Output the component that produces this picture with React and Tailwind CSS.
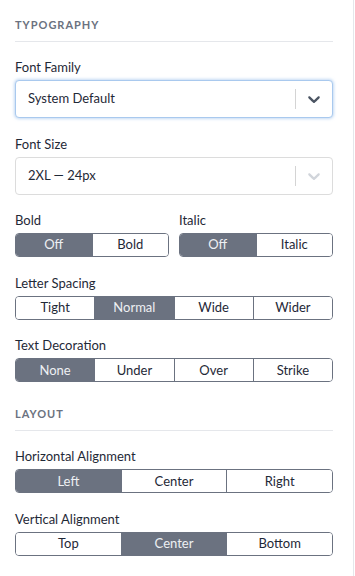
import React, { useState } from "react";

const font = { fontFamily: "Lato, 'Noto Sans', sans-serif" };

function Chevron({ className }) {
	return (
		<svg viewBox="0 0 20 20" width="20" height="20" className={className} fill="currentColor">
			<path d="M4.516 7.548c0.436-0.446 1.043-0.481 1.576 0l3.908 3.747 3.908-3.747c0.533-0.481 1.141-0.446 1.574 0 0.436 0.445 0.408 1.197 0 1.615-0.406 0.418-4.695 4.502-4.695 4.502-0.217 0.223-0.502 0.335-0.787 0.335s-0.57-0.112-0.789-0.335c0 0-4.287-4.084-4.695-4.502s-0.436-1.17 0-1.615z" />
		</svg>
	);
}

function SectionTitle({ children }) {
	return (
		<div className="pb-2 border-b border-[#e5e7eb] text-[11px] leading-4 font-bold tracking-[0.09em] text-[#6b7280] uppercase">
			{children}
		</div>
	);
}

function Label({ children }) {
	return <div className="text-[13px] leading-[18px] text-[#1f2937] mb-1">{children}</div>;
}

function Select({ value, focused }) {
	return (
		<div
			className={
				"flex items-center h-[38px] rounded-[4px] bg-white border " +
				(focused
					? "border-[#a9c9ee] shadow-[0_0_3px_1px_rgba(147,187,235,0.55)]"
					: "border-[#dcdcdc]")
			}
		>
			<div className="flex-1 pl-3 text-[13px] text-[#1f2937]">{value}</div>
			<div className="w-px h-5 bg-[#d4d4d4]" />
			<div className="px-2 flex items-center">
				<Chevron className={focused ? "text-[#4b5563]" : "text-[#d1d5db]"} />
			</div>
		</div>
	);
}

function Segmented({ options, initial }) {
	const [active, setActive] = useState(initial);
	return (
		<div className="flex h-[24px] rounded-[4px] border border-[#6b7280] overflow-hidden">
			{options.map((o, i) => (
				<button
					key={o}
					onClick={() => setActive(o)}
					className={
						"flex-1 flex items-center justify-center text-[13px] " +
						(i > 0 ? "border-l border-[#6b7280] " : "") +
						(active === o ? "bg-[#6b7280] text-[#eef0f3]" : "bg-white text-[#1f2937]")
					}
				>
					{o}
				</button>
			))}
		</div>
	);
}

export default function App() {
	return (
		<div style={font} className="w-[355px] h-[576px] bg-white">
			<div className="w-[354px] h-full border-r border-[#e5e7eb] pl-[15px] pr-[20px] pt-[17px]">
				<SectionTitle>Typography</SectionTitle>

				<div className="pt-4 flex flex-col gap-[16.6px]">
					<div>
						<Label>Font Family</Label>
						<Select value="System Default" focused />
					</div>
					<div>
						<Label>Font Size</Label>
						<Select value="2XL — 24px" />
					</div>
					<div className="flex gap-[10px]">
						<div className="flex-1">
							<Label>Bold</Label>
							<Segmented options={["Off", "Bold"]} initial="Off" />
						</div>
						<div className="flex-1">
							<Label>Italic</Label>
							<Segmented options={["Off", "Italic"]} initial="Off" />
						</div>
					</div>
					<div>
						<Label>Letter Spacing</Label>
						<Segmented options={["Tight", "Normal", "Wide", "Wider"]} initial="Normal" />
					</div>
					<div>
						<Label>Text Decoration</Label>
						<Segmented options={["None", "Under", "Over", "Strike"]} initial="None" />
					</div>
				</div>

				<div className="pt-[24px]">
					<SectionTitle>Layout</SectionTitle>
				</div>

				<div className="pt-4 flex flex-col gap-[16.6px]">
					<div>
						<Label>Horizontal Alignment</Label>
						<Segmented options={["Left", "Center", "Right"]} initial="Left" />
					</div>
					<div>
						<Label>Vertical Alignment</Label>
						<Segmented options={["Top", "Center", "Bottom"]} initial="Center" />
					</div>
				</div>
			</div>
		</div>
	);
}
